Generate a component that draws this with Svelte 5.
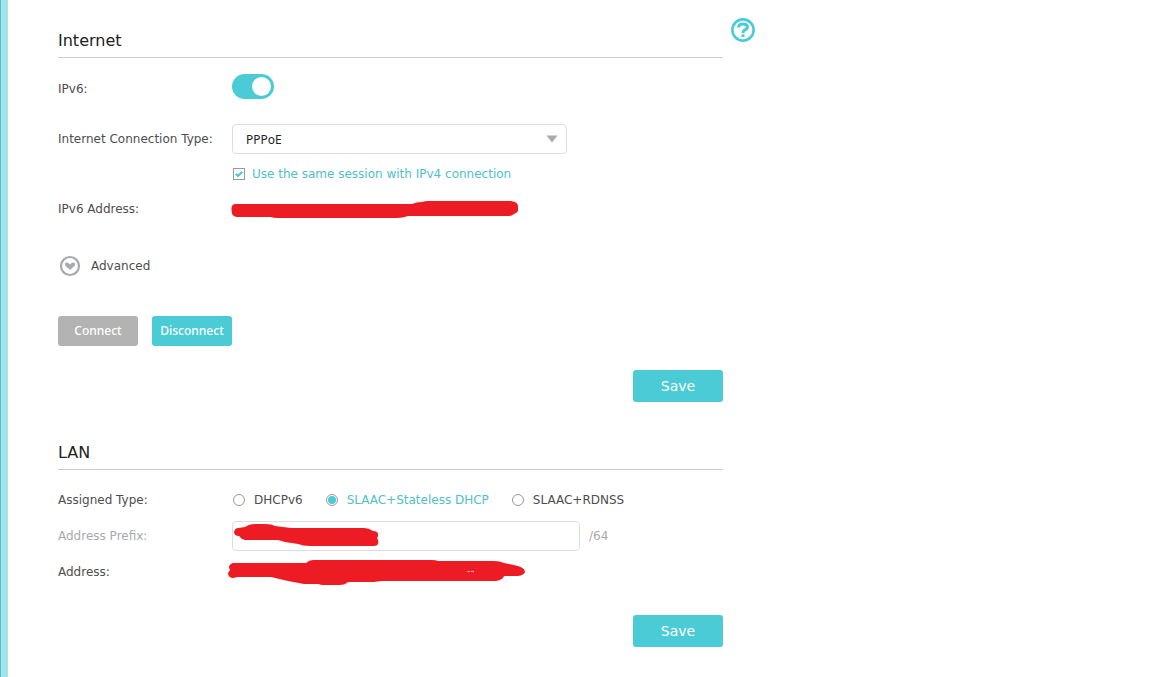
<script>
  let ipv6 = $state(true);
  let connection = $state('PPPoE');
  let sameSession = $state(true);
  let assigned = $state('stateless');

  const types = [
    { value: 'dhcpv6', label: 'DHCPv6' },
    { value: 'stateless', label: 'SLAAC+Stateless DHCP' },
    { value: 'rdnss', label: 'SLAAC+RDNSS' }
  ];
</script>

<div class="page">
  <main>
    <form class="panel" onsubmit={(e) => e.preventDefault()}>
      <section>
        <h2>Internet</h2>
        <div class="row first">
          <label class="name" for="ipv6">IPv6:</label>
          <input class="toggle" id="ipv6" type="checkbox" role="switch" bind:checked={ipv6} />
        </div>
        <div class="row">
          <label class="name" for="connection">Internet Connection Type:</label>
          <div class="select">
            <select id="connection" bind:value={connection}>
              <option>PPPoE</option>
            </select>
            <svg width="12" height="8" viewBox="0 0 12 8"><path d="M0.5 0.5h11L6 7.5z" fill="#a7a9ac" /></svg>
          </div>
        </div>
        <label class="session" class:on={sameSession}>
          <span class="check">
            <input type="checkbox" bind:checked={sameSession} />
            {#if sameSession}
              <svg width="12" height="12" viewBox="0 0 12 12"><path d="M2.8 5.8L5 8L9.3 3.8" fill="none" stroke="#4acbd6" stroke-width="2.2" /></svg>
            {/if}
          </span>
          Use the same session with IPv4 connection
        </label>
        <div class="row address">
          <span class="name">IPv6 Address:</span>
          <svg class="mark" width="294" height="30" viewBox="0 0 294 30">
            <path d="M4 10H181Q185 8 191 8Q194 7 197 7H280Q287 8 287 12V17Q286 19 283 20Q281 22 278 22H177Q172 24 166 24H47Q42 24 40 23H6Q1 22 1 19Q-1 11 4 10z" />
          </svg>
        </div>
        <button class="advanced" type="button">
          <svg width="22" height="22" viewBox="0 0 22 22">
            <circle cx="11" cy="11" r="9" fill="none" stroke="#a7a9ac" stroke-width="2.2" />
            <path d="M11 15L6.4 10.8Q5.3 9.4 6.4 8.1Q7.8 6.8 9.4 8L11 9.4L12.6 8Q14.2 6.8 15.6 8.1Q16.7 9.4 15.6 10.8z" fill="#a7a9ac" />
          </svg>
          Advanced
        </button>
        <div class="actions">
          <button class="small" type="button" disabled>Connect</button>
          <button class="small" type="button">Disconnect</button>
        </div>
        <button class="save" type="submit">Save</button>
      </section>

      <section class="lan">
        <h2>LAN</h2>
        <div class="row types" role="radiogroup" aria-labelledby="assigned">
          <span class="name" id="assigned">Assigned Type:</span>
          <div class="radios">
            {#each types as type}
              <label class:on={assigned === type.value}>
                <input type="radio" name="assigned" value={type.value} bind:group={assigned} />
                {type.label}
              </label>
            {/each}
          </div>
        </div>
        <div class="row muted">
          <label class="name" for="prefix">Address Prefix:</label>
          <div class="prefix">
            <input id="prefix" type="text" disabled />
            <svg class="mark" width="150" height="30" viewBox="0 0 150 30">
              <path d="M4 7L11 6Q15 3 21 3H31Q38 3 41 5L57 7H130Q135 7 139 10Q145 10 144 15Q144 16 143 17Q145 20 144 23Q143 25 140 25H76Q69 25 64 23L51 21L44 19H11Q7 18 5 15Q0 15 0 11Q1 7 4 7z" />
            </svg>
          </div>
          <span>/64</span>
        </div>
        <div class="row">
          <span class="name">Address:</span>
          <svg class="mark wide" width="300" height="30" viewBox="0 0 300 30">
            <path d="M5 6H78Q81 3 85 3H204Q208 3 210 4H266Q272 4 276 6L290 9Q297 11 297 15Q296 18 290 19H276Q275 23 268 24H154L146 25H122Q118 25 119 26Q116 28 112 28H94L90 27H76L60 24L43 20H9Q7 21 4 21Q0 20 0 16L2 13Q-1 8 5 6z" />
            <path d="M239 14.5h3m1 0h3" stroke="#f8b8ba" />
          </svg>
        </div>
        <button class="save" type="submit">Save</button>
      </section>
    </form>
    <button class="help" type="button" aria-label="Help">
      <svg width="24" height="24" viewBox="0 0 24 24" fill="none" stroke="#4acbd6">
        <circle cx="12" cy="12" r="10.6" stroke-width="2.6" />
        <path d="M7.6 9.6Q7.6 6 12 6Q16.4 6 16.4 9Q16.4 10.8 14 11.8Q12 12.8 12 15" stroke-width="3" />
        <path d="M10.5 17.7h3" stroke-width="2.8" />
      </svg>
    </button>
  </main>
</div>

<style>
  :global(body) {
    margin: 0;
    background: #fff;
  }

  .page {
    min-height: 100vh;
    box-sizing: border-box;
    border-left: 1px solid #52bfca;
    font: 12px/20px Verdana, "DejaVu Sans", sans-serif;
    color: #4d4d4d;
  }

  main {
    display: flex;
    align-items: flex-start;
    gap: 8px;
    min-height: 100vh;
    box-sizing: border-box;
    border-left: 7px solid #a0e6e8;
    padding: 18px 20px 20px 50px;
  }

  .panel {
    flex: 0 1 665px;
    padding-top: 4px;
  }

  section {
    display: flex;
    flex-direction: column;
  }

  .lan {
    margin-top: 32px;
  }

  h2 {
    margin: 0;
    height: 35px;
    border-bottom: 1px solid #ccc;
    font-size: 16px;
    line-height: 38px;
    font-weight: normal;
    color: #222;
  }

  button,
  input,
  select {
    margin: 0;
    font: inherit;
  }

  button {
    border: 0;
    padding: 0;
    cursor: pointer;
  }

  .row {
    display: flex;
    align-items: center;
    height: 30px;
    margin-top: 6px;
  }

  .first {
    align-items: flex-start;
    margin: 16px 0 20px;
    line-height: 30px;
  }

  .first + .row {
    margin-top: 0;
  }

  .address {
    margin-top: 10px;
  }

  .types {
    margin-top: 15px;
  }

  .name {
    flex: 0 0 174px;
    white-space: nowrap;
  }

  .toggle {
    appearance: none;
    display: flex;
    box-sizing: border-box;
    width: 42px;
    height: 25px;
    padding: 3px;
    border-radius: 13px;
    background: #b3b3b3;
  }

  .toggle::before {
    content: "";
    width: 19px;
    height: 19px;
    border-radius: 50%;
    background: #fff;
  }

  .toggle:checked {
    justify-content: flex-end;
    background: #4acbd6;
  }

  .select {
    position: relative;
    flex: 0 1 335px;
  }

  .select svg {
    position: absolute;
    right: 9px;
    top: 11px;
    pointer-events: none;
  }

  select,
  .prefix input {
    display: block;
    box-sizing: border-box;
    width: 100%;
    height: 30px;
    border: 1px solid #ddd;
    border-radius: 4px;
    background: #fff;
    color: #222;
  }

  select {
    appearance: none;
    padding: 0 13px;
    font: 12px "Noto Sans", sans-serif;
  }

  .session {
    display: flex;
    align-items: center;
    gap: 7px;
    margin: 10px 0 0 175px;
  }

  .on {
    color: #4fc0ca;
  }

  .check {
    display: flex;
    position: relative;
  }

  .check svg {
    position: absolute;
    inset: 0;
    pointer-events: none;
  }

  .session input,
  .radios input {
    appearance: none;
    display: grid;
    place-items: center;
    flex: none;
    box-sizing: border-box;
    width: 12px;
    height: 12px;
    border: 1px solid #999;
    background: #fff;
  }

  .radios {
    display: flex;
    gap: 23px;
    padding-left: 1px;
  }

  .radios label {
    display: flex;
    align-items: center;
    gap: 9px;
    white-space: nowrap;
  }

  .radios input {
    border-radius: 50%;
  }

  .radios input:checked::before {
    content: "";
    width: 8px;
    height: 8px;
    border-radius: 50%;
    background: #4acbd6;
  }

  .mark {
    display: block;
    margin-left: -1px;
    overflow: visible;
    fill: #ed1c24;
  }

  .wide {
    margin-left: -4px;
  }

  .advanced {
    display: flex;
    align-items: center;
    align-self: flex-start;
    gap: 10px;
    height: 30px;
    margin: 27px 0 35px;
    padding-left: 1px;
    background: none;
    color: inherit;
  }

  .actions {
    display: flex;
    gap: 14px;
  }

  .small,
  .save {
    border-radius: 3px;
    background: #4acbd6;
    color: #fff;
  }

  .small {
    width: 80px;
    height: 30px;
    padding-bottom: 2px;
    font: 500 12px "Noto Sans", sans-serif;
  }

  .small:disabled {
    background: #b3b3b3;
  }

  .save {
    align-self: flex-end;
    width: 90px;
    height: 32px;
    margin-top: 24px;
    font-size: 14px;
  }

  .lan .save {
    margin-top: 28px;
  }

  .muted {
    color: #a7a9ac;
  }

  .prefix {
    position: relative;
    flex: 0 1 348px;
    margin-right: 9px;
  }

  .prefix .mark {
    position: absolute;
    left: 3px;
    top: 0;
  }

  .help {
    display: flex;
    background: none;
  }
</style>
